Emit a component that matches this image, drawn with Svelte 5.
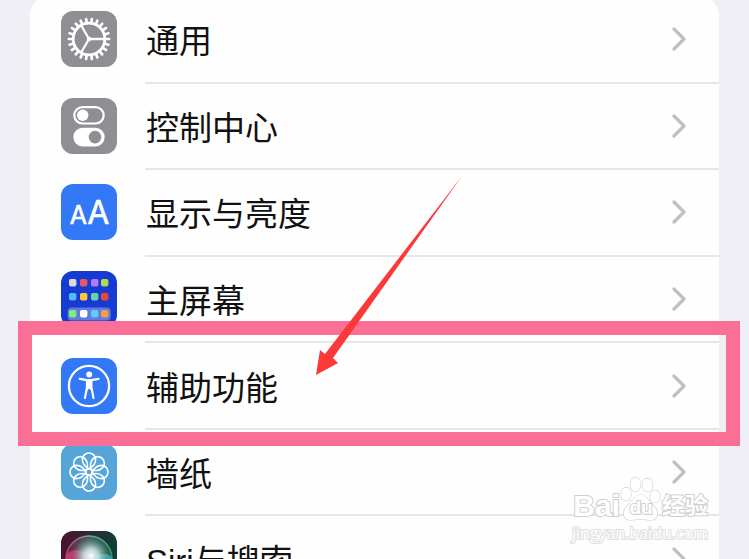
<script>
  const items = [
    { id: 'general', label: '通用' },
    { id: 'control', label: '控制中心' },
    { id: 'display', label: '显示与亮度' },
    { id: 'home', label: '主屏幕' },
    { id: 'access', label: '辅助功能', marked: true },
    { id: 'wallpaper', label: '墙纸' },
    { id: 'siri', label: 'Siri与搜索' }
  ];
  const teeth = Array.from({ length: 22 }, (_, i) => (i * 360) / 22);
  const petals = [0, 45, 90, 135, 180, 225, 270, 315];
  const apps = [
    ['#dcdcdc', '#ee5564', '#b27bff', '#b3da49'],
    ['#54b8fa', '#ffc739', '#66d4a5', '#ee4636'],
    ['#7bf078', '#ffffff', '#5fcdfb', '#f79d49']
  ];
  const appX = [8, 19, 30, 40];
  const appY = [8, 22, 39];
</script>

<main>
  <nav class="card" aria-label="设置">
    {#each items as item (item.id)}
      <a class="row" href={'#' + item.id}>
        <svg class="icon {item.id}" viewBox="0 0 56 56" aria-hidden="true">
          {#if item.id === 'general'}
            <g fill="none" stroke="#fff" stroke-width="2.8" stroke-linecap="round">
              <circle cx="28" cy="28" r="15.8" />
              {#each teeth as angle}
                <path d="M44 28H48.2" stroke-width="2.7" transform="rotate({angle} 28 28)" />
              {/each}
              <path d="M28 28H43M28 28L20.5 15M28 28L20.5 41" stroke-width="2.3" />
            </g>
            <circle cx="28" cy="28" r="2.2" fill="#fff" />
          {:else if item.id === 'control'}
            <rect x="13.3" y="9.1" width="29.4" height="16.4" rx="8.2" fill="none" stroke="#fff" stroke-width="2.2" />
            <circle cx="21.7" cy="17.3" r="5.7" fill="#fff" />
            <rect x="12.3" y="29.7" width="31.4" height="18.8" rx="9.4" fill="#fff" />
            <circle cx="34" cy="39.1" r="6.3" fill="#8e8e93" />
          {:else if item.id === 'display'}
            <g class="letters" fill="#fff" stroke="#fff" stroke-width=".6" stroke-linejoin="round" text-anchor="middle">
              <text x="17.4" y="40" font-size="25">A</text>
              <text x="37.4" y="40" font-size="32">A</text>
            </g>
          {:else if item.id === 'home'}
            <rect x="6.7" y="36.5" width="43" height="13" rx="4" fill="#fff" opacity=".32" />
            {#each apps as line, r}
              {#each line as color, c}
                <rect x={appX[c]} y={appY[r]} width="7.4" height="7.4" rx="1.8" fill={color} />
              {/each}
            {/each}
          {:else if item.id === 'access'}
            <circle cx="28" cy="28" r="20.1" fill="none" stroke="#fff" stroke-width="2.3" />
            <circle cx="28.2" cy="16.6" r="3" fill="#fff" />
            <path
              d="M18.8 20.9L26 22.2H30.4L37.6 20.9M26 22.2V29.5L23.9 40M30.4 22.2V29.5L32.5 40"
              fill="none" stroke="#fff" stroke-width="2.2" stroke-linecap="round" stroke-linejoin="round"
            />
            <path d="M25.6 22H30.8V29L30.2 32.5L28.2 30.5L26.2 32.5L25.6 29Z" fill="#fff" />
          {:else if item.id === 'wallpaper'}
            <g fill="none" stroke="#fff" stroke-width="1.6">
              {#each petals as angle}
                <path
                  d="M0 -3.2C-4.5 -5.5 -6.6 -8.5 -6.6 -12.4A6.6 6.6 0 0 1 6.6 -12.4C6.6 -8.5 4.5 -5.5 0 -3.2Z"
                  transform="translate(28 28) rotate({angle})"
                />
              {/each}
              <circle cx="28" cy="28" r="3.2" />
            </g>
          {:else}
            <defs>
              <linearGradient id="siri-bg" x1="0" x2="1">
                <stop offset="0" stop-color="#4a1230" />
                <stop offset=".5" stop-color="#2c2a35" />
                <stop offset="1" stop-color="#123f36" />
              </linearGradient>
              <linearGradient id="siri-ring" x1="0" x2="1">
                <stop offset="0" stop-color="#b93a6c" />
                <stop offset=".5" stop-color="#6fae9b" />
                <stop offset="1" stop-color="#2f9a78" />
              </linearGradient>
              <radialGradient id="siri-glow">
                <stop offset="0" stop-color="#fff" />
                <stop offset=".4" stop-color="#c9e6e4" stop-opacity=".85" />
                <stop offset="1" stop-color="#5aa79a" stop-opacity="0" />
              </radialGradient>
            </defs>
            <rect width="56" height="56" fill="url(#siri-bg)" />
            <circle cx="28" cy="28" r="23" fill="url(#siri-ring)" fill-opacity=".35" stroke="url(#siri-ring)" stroke-width="1.6" />
            <ellipse cx="16" cy="26" rx="11" ry="7" fill="#e0447e" opacity=".7" />
            <ellipse cx="43" cy="28" rx="8" ry="5" fill="#4bb6c4" opacity=".7" />
            <circle cx="30" cy="25" r="19" fill="url(#siri-glow)" />
          {/if}
        </svg>
        <span class="label">{item.label}</span>
        <svg class="chevron" viewBox="0 0 14 26" aria-hidden="true">
          <path d="M2 3L12 13L2 23" />
        </svg>
        {#if item.marked}<span class="marker"></span>{/if}
      </a>
    {/each}
  </nav>

  <svg class="arrow" viewBox="0 0 146 199" aria-hidden="true">
    <path d="M0 199L4 174L9 178L146 0L17 182L22 187Z" fill="#fd3838" />
  </svg>

  <div class="watermark">
    <div class="brand">
      <span class="latin">Bai</span>
      <span class="paw">
        <svg viewBox="0 0 42 46" aria-hidden="true">
          <g fill="#fff" stroke="#cfcfcf" stroke-width="1.2">
            <ellipse cx="6" cy="18" rx="5" ry="6.6" />
            <ellipse cx="15.5" cy="8.5" rx="5.2" ry="7" />
            <ellipse cx="27.5" cy="9" rx="5.2" ry="6.6" />
            <ellipse cx="35" cy="20.5" rx="5" ry="6.2" />
            <path d="M20.5 19C26 19 28 24 33 29C40 36 38 44 30 44C26 44 24 43 20.5 43C17 43 15 44 11 44C3 44 1 36 8 29C13 24 15 19 20.5 19Z" />
          </g>
        </svg>
        <span class="du">du</span>
      </span>
      <span class="cjk">经验</span>
    </div>
    <div class="site">jingyan.baidu.com</div>
  </div>
</main>

<style>
  :global(body) {
    margin: 0;
    background: #f0eff5;
  }
  main {
    position: relative;
    box-sizing: border-box;
    height: 100vh;
    padding: 0 30px;
    overflow: hidden;
    font-family: 'Liberation Sans', 'Noto Sans CJK SC', sans-serif;
  }
  .card {
    display: grid;
    grid-template-rows: repeat(7, 1fr);
    height: 606px;
    margin-top: -4px;
    border-radius: 20px;
    background: #fefefe;
  }
  .row {
    position: relative;
    display: flex;
    align-items: center;
    gap: 29px;
    padding: 0 33px 0 31px;
    color: #111;
    text-decoration: none;
  }
  .row:not(:last-child)::after {
    content: '';
    position: absolute;
    left: 115px;
    right: 0;
    bottom: -1px;
    height: 2px;
    background: #e6e6e8;
  }
  .icon {
    flex: none;
    width: 56px;
    height: 56px;
    border-radius: 12px;
  }
  .general, .control { background: #8e8e93; }
  .display, .access { background: #3378f6; }
  .home { background: #153bd2; }
  .wallpaper { background: #55a5d8; }
  .letters {
    font-family: Inter, sans-serif;
  }
  .label {
    flex: 1;
    padding-top: 6px;
    font-size: 33px;
    line-height: 48px;
    white-space: nowrap;
  }
  .chevron {
    flex: none;
    width: 14px;
    height: 26px;
    fill: none;
    stroke: #c0c0c2;
    stroke-width: 3.2;
    stroke-linecap: round;
    stroke-linejoin: round;
  }
  .marker {
    position: absolute;
    z-index: 1;
    top: -21px;
    right: -21px;
    bottom: -17px;
    left: -12px;
    border: 14px solid #f96f95;
  }
  .arrow {
    position: absolute;
    z-index: 2;
    top: 176px;
    left: 316px;
    width: 146px;
    height: 199px;
  }
  .watermark {
    position: absolute;
    right: 41px;
    bottom: 15px;
    color: #fff;
    -webkit-text-stroke: 2px #cfcfcf;
    paint-order: stroke fill;
  }
  .brand {
    display: flex;
    align-items: flex-end;
    justify-content: flex-end;
    height: 46px;
  }
  .latin {
    font-size: 30px;
    font-weight: bold;
    line-height: 32px;
  }
  .paw {
    position: relative;
    width: 42px;
    height: 46px;
  }
  .paw svg {
    display: block;
    width: 42px;
    height: 46px;
  }
  .du {
    position: absolute;
    right: 0;
    bottom: 3px;
    left: 0;
    font-size: 19px;
    font-weight: bold;
    line-height: 22px;
    text-align: center;
  }
  .cjk {
    font-size: 23px;
    font-weight: bold;
    line-height: 32px;
  }
  .site {
    font-family: 'Open Sans', sans-serif;
    font-size: 16px;
    line-height: 22px;
    -webkit-text-stroke: 2px #dedede;
  }
</style>
